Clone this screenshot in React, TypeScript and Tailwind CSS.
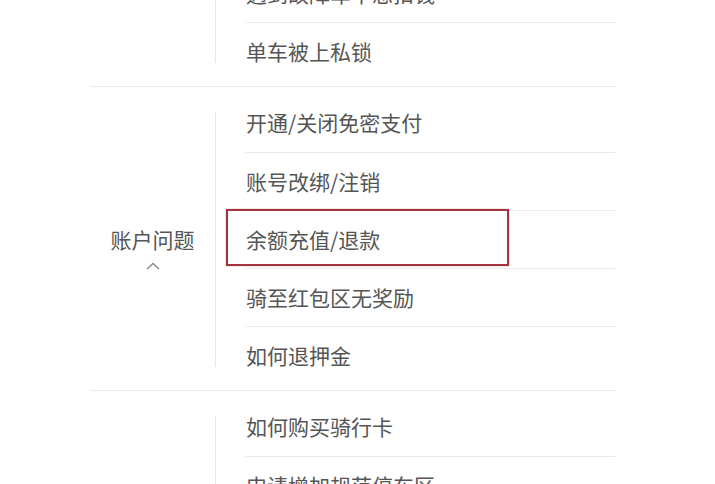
import React from "react";

type Section = { label: string; open?: boolean; rows: string[]; highlight?: number };

const sections: Section[] = [
  {
    label: "车辆问题",
    rows: ["找不到车", "开锁失败", "无法还车", "遇到故障车不想扣钱", "单车被上私锁"],
  },
  {
    label: "账户问题",
    open: true,
    rows: ["开通/关闭免密支付", "账号改绑/注销", "余额充值/退款", "骑至红包区无奖励", "如何退押金"],
    highlight: 2,
  },
  {
    label: "骑行卡问题",
    rows: ["如何购买骑行卡", "申请增加规范停车区", "骑行卡退款", "骑行卡使用规则", "其他问题"],
  },
];

function Chevron({ up }: { up?: boolean }) {
  return (
    <svg width="16" height="8" viewBox="0 0 16 8" className="mt-[8px] block">
      <path
        d={up ? "M2 7 L8 1.5 L14 7" : "M2 1 L8 6.5 L14 1"}
        fill="none"
        stroke="#8a8a8a"
        strokeWidth="1.5"
      />
    </svg>
  );
}

export default function App() {
  return (
    <div
      className="min-h-[484px] w-[715px] overflow-hidden bg-white text-[#555]"
      style={{ fontFamily: '"Noto Sans CJK SC", "Noto Sans", sans-serif' }}
    >
      <div className="ml-[90px] mt-[-217px] w-[525px]">
        {sections.map((s) => (
          <div key={s.label} className="flex border-b border-[#ebebeb]">
            <div className="flex w-[125px] flex-col items-center justify-center pt-[16px]">
              <div className="text-[21px] leading-[30px]">{s.label}</div>
              <Chevron up={s.open} />
            </div>
            <div className="mb-[23px] mt-[25px] w-px bg-[#e6e6e6]" />
            <div className="flex-1 pb-[6px] pl-[29px] pt-[7px]">
              {s.rows.map((r, i) => (
                <div
                  key={r}
                  className={
                    "relative flex h-[58px] items-center text-[21px] " +
                    (i > 0 ? "border-t border-[#ebebeb]" : "")
                  }
                >
                  <span className="pl-px">{r}</span>
                  {s.highlight === i && (
                    <div className="absolute left-[-19px] top-[-2px] h-[57px] w-[283px] border-2 border-[#a23440] shadow-[0_0_1px_#c9737c]" />
                  )}
                </div>
              ))}
            </div>
          </div>
        ))}
      </div>
    </div>
  );
}
